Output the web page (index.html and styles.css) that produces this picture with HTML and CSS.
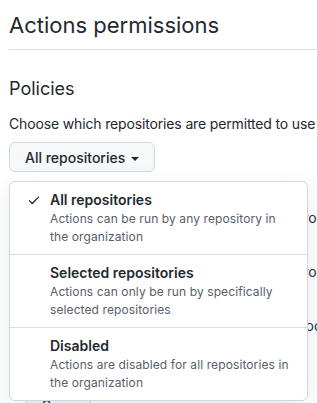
FILE: index.html
```html
<!DOCTYPE html>
<html>
    <head>
        <title>Actions permissions</title>
        <link rel="stylesheet" href="styles.css">
    </head>
    <body>
        <h1 class="page_title">Actions permissions</h1>

        <h2 class="section_title">Policies</h2>
        <p class="note">Choose which repositories are permitted to use GitHub Actions.</p>

        <button class="btn">All repositories <span class="caret"></span></button>

        <div class="options">
            <div class="option">Allow all actions and reusable workflows from selected sources</div>
            <div class="option">Allow all actions and reusable workflows from enterprise sources</div>
            <div class="option">Allow all actions, reusable workflows and local action definitions</div>
        </div>

        <button class="btn btn_save">Save</button>

        <!-- open dropdown lies over the page -->
        <div class="menu">
            <div class="menu_item">
                <svg class="check" width="16" height="16" viewBox="0 0 16 16"><path d="M13.78 4.22a.75.75 0 0 1 0 1.06l-7.25 7.25a.75.75 0 0 1-1.06 0L2.22 9.28a.75.75 0 0 1 1.06-1.06L6 10.94l6.72-6.72a.75.75 0 0 1 1.06 0Z"></path></svg>
                <div class="menu_title">All repositories</div>
                <div class="menu_desc">Actions can be run by any repository in the organization</div>
            </div>
            <div class="menu_item">
                <div class="menu_title">Selected repositories</div>
                <div class="menu_desc">Actions can only be run by specifically selected repositories</div>
            </div>
            <div class="menu_item">
                <div class="menu_title">Disabled</div>
                <div class="menu_desc">Actions are disabled for all repositories in the organization</div>
            </div>
        </div>
    </body>
</html>
```

FILE: styles.css
```css
body {
    margin: 0;
    padding: 0 0 0 9px;
    font-family: Inter, "Liberation Sans", sans-serif;
    color: #24292f;
    background-color: white;
    overflow: hidden;
    position: relative;
    height: 403px;
}
.page_title {
    margin: 0;
    padding: 7px 0 6px 0;
    font-size: 22px;
    line-height: 36px;
    font-weight: 400;
    border-bottom: 1px solid #d8dee4;
}
.section_title {
    margin: 25px 0 0 0;
    font-size: 18px;
    line-height: 28px;
    font-weight: 400;
}
.note {
    margin: 10px 0 0 0;
    font-size: 14px;
    line-height: 21px;
    letter-spacing: -0.15px;
    white-space: nowrap;
}
.btn {
    display: block;
    margin-top: 8px;
    height: 30px;
    padding: 0 15px;
    font-family: inherit;
    font-size: 14px;
    font-weight: 500;
    color: #24292f;
    background-color: #f6f8fa;
    border: 1px solid #d0d7de;
    border-radius: 6px;
}
.caret {
    display: inline-block;
    width: 0;
    height: 0;
    margin-left: 2px;
    vertical-align: middle;
    border-top: 4px solid #24292f;
    border-left: 4px solid transparent;
    border-right: 4px solid transparent;
}
.options {
    margin: 36px 0 0 17px;
}
.option {
    font-size: 14px;
    line-height: 20px;
    height: 54px;
    white-space: nowrap;
}
.btn_save {
    margin: 20px 0 0 17px;
    width: 65px;
    padding: 0;
}
.menu {
    position: absolute;
    top: 181px;
    left: 9px;
    width: 297px;
    background-color: white;
    border: 1px solid #d0d7de;
    border-radius: 6px;
    box-shadow: 0 8px 24px rgba(140, 149, 159, 0.2);
}
.menu_item {
    position: relative;
    padding: 8px 16px 8px 40px;
    border-bottom: 1px solid #d8dee4;
}
.menu_item:last-child {
    border-bottom: none;
}
.check {
    position: absolute;
    left: 17px;
    top: 11px;
    width: 14px;
    height: 14px;
    fill: #24292f;
}
.menu_title {
    font-size: 14px;
    line-height: 20px;
    font-weight: 600;
}
.menu_desc {
    font-size: 12px;
    line-height: 18px;
    letter-spacing: 0.1px;
    color: #57606a;
}
```
